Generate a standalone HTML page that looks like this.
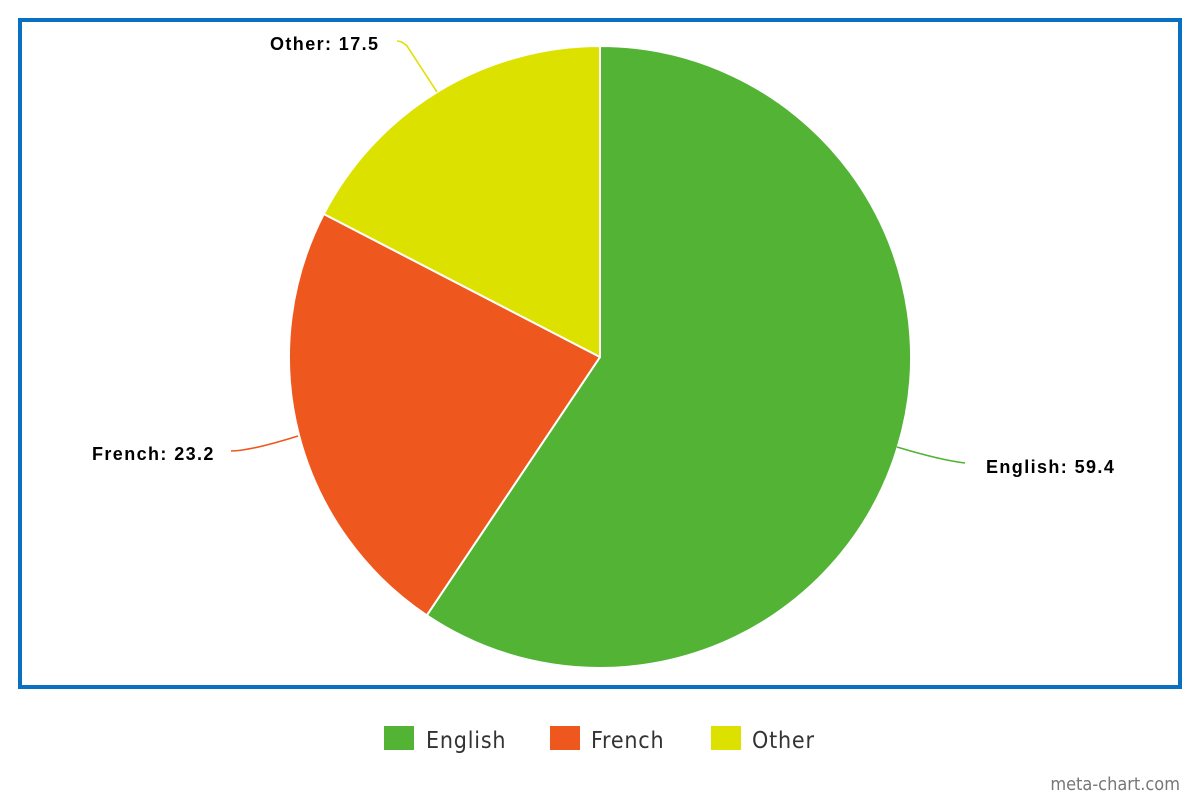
<!DOCTYPE html>
<html><head><meta charset="utf-8"><style>
html,body{margin:0;padding:0;background:#fff;}
svg{display:block}
</style></head><body>
<svg width="1200" height="800" xmlns="http://www.w3.org/2000/svg">
<rect x="20" y="20" width="1160" height="667" fill="#fff" stroke="#0a71c2" stroke-width="4"/>
<g stroke="#fff" stroke-width="2" stroke-linejoin="round">
<path d="M600 357 L600 46 A311 311 0 1 1 426.8 615.3 Z" fill="#52b334"/>
<path d="M600 357 L426.8 615.3 A311 311 0 0 1 323.8 214 Z" fill="#ee581e"/>
<path d="M600 357 L323.8 214 A311 311 0 0 1 600 46 Z" fill="#dde100"/>
</g>
<g fill="none" stroke-width="1.6">
<path d="M897 447 Q940 460 965 463" stroke="#52b334"/>
<path d="M298 436 Q250 451 231 451" stroke="#ee581e"/>
<path d="M437 92 L407 46 Q402 41 397 41" stroke="#dde100"/>
</g>
<g font-family="Liberation Sans, sans-serif" font-weight="bold" font-size="18" fill="#000" letter-spacing="1.4">
<text x="986" y="473">English: 59.4</text>
<text x="92" y="460">French: 23.2</text>
<text x="270" y="50">Other: 17.5</text>
</g>
<rect x="384" y="726" width="30" height="24" fill="#52b334"/>
<rect x="550" y="726" width="30" height="24" fill="#ee581e"/>
<rect x="711" y="726" width="30" height="24" fill="#dde100"/>
<g font-family="DejaVu Sans Condensed, DejaVu Sans, sans-serif" font-size="23" fill="#333" letter-spacing="0.8">
<text x="426" y="748">English</text>
<text x="591" y="748">French</text>
<text x="752" y="748">Other</text>
</g>
<text x="1180" y="790" text-anchor="end" font-family="DejaVu Sans Condensed, DejaVu Sans, sans-serif" font-size="18" fill="#777">meta-chart.com</text>
</svg>
</body></html>
